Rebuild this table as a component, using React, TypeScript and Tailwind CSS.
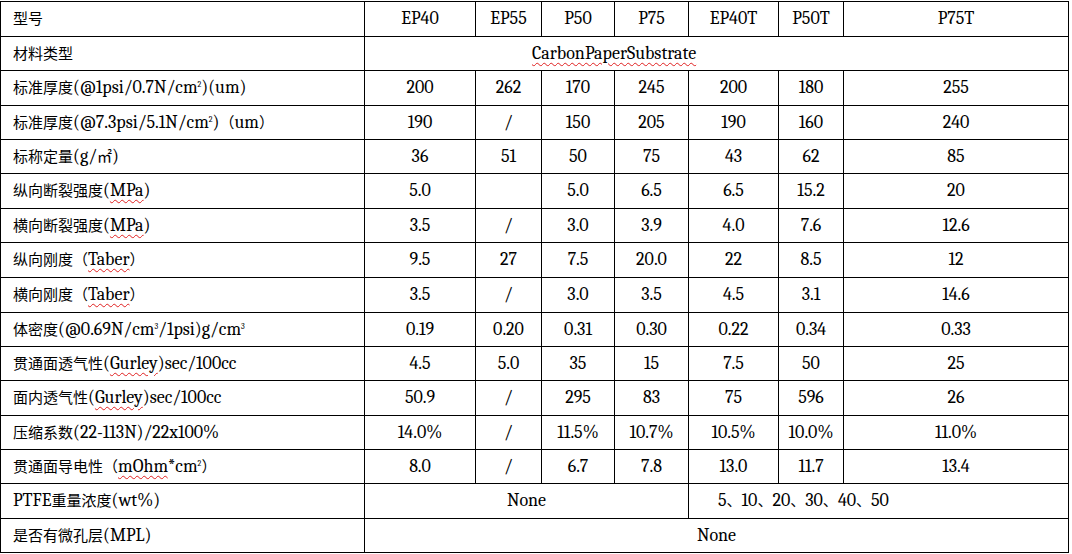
import React from "react";

const CJK = /([\u3000-\u303f\u4e00-\u9fff\uff00-\uffef\u3380-\u33ff]+)/;

function T({ s }: { s: string }) {
  const parts = s.split(CJK);
  return (
    <>
      {parts.map((p, i) =>
        p === "" ? null : CJK.test(p) ? (
          <span key={i} className="[font-family:Noto_Sans_CJK_SC,sans-serif] text-[15px]">
            {p}
          </span>
        ) : (
          <span key={i}>{p}</span>
        )
      )}
    </>
  );
}

const W = ({ children }: { children: React.ReactNode }) => (
  <span className="underline decoration-wavy decoration-[#e02020] decoration-1 underline-offset-[3px]">{children}</span>
);

const Sup = ({ c }: { c: string }) => <sup className="text-[8px] -top-[6px] relative align-baseline">{c}</sup>;

type Row = { label: React.ReactNode; vals: string[] };

const rows: Row[] = [
  { label: <><T s="标准厚度" />(@1psi/0.7N/cm<Sup c="2" />)(um)</>, vals: ["200", "262", "170", "245", "200", "180", "255"] },
  { label: <><T s="标准厚度" />(@7.3psi/5.1N/cm<Sup c="2" />)<T s="（" />um<T s="）" /></>, vals: ["190", "/", "150", "205", "190", "160", "240"] },
  { label: <><T s="标称定量" />(g/<T s="㎡" />)</>, vals: ["36", "51", "50", "75", "43", "62", "85"] },
  { label: <><T s="纵向断裂强度" />(<W>MPa</W>)</>, vals: ["5.0", "", "5.0", "6.5", "6.5", "15.2", "20"] },
  { label: <><T s="横向断裂强度" />(<W>MPa</W>)</>, vals: ["3.5", "/", "3.0", "3.9", "4.0", "7.6", "12.6"] },
  { label: <><T s="纵向刚度（" /><W>Taber</W><T s="）" /></>, vals: ["9.5", "27", "7.5", "20.0", "22", "8.5", "12"] },
  { label: <><T s="横向刚度（" /><W>Taber</W><T s="）" /></>, vals: ["3.5", "/", "3.0", "3.5", "4.5", "3.1", "14.6"] },
  { label: <><T s="体密度" />(@0.69N/cm<Sup c="3" />/1psi)g/cm<Sup c="3" /></>, vals: ["0.19", "0.20", "0.31", "0.30", "0.22", "0.34", "0.33"] },
  { label: <><T s="贯通面透气性" />(<W>Gurley</W>)sec/100cc</>, vals: ["4.5", "5.0", "35", "15", "7.5", "50", "25"] },
  { label: <><T s="面内透气性" />(<W>Gurley</W>)sec/100cc</>, vals: ["50.9", "/", "295", "83", "75", "596", "26"] },
  { label: <><T s="压缩系数" />(22-113N)/22x100%</>, vals: ["14.0%", "/", "11.5%", "10.7%", "10.5%", "10.0%", "11.0%"] },
  { label: <><T s="贯通面导电性（" /><W>mOhm</W>*cm<Sup c="2" /><T s="）" /></>, vals: ["8.0", "/", "6.7", "7.8", "13.0", "11.7", "13.4"] },
];

const td = "border border-black text-center align-middle p-0 whitespace-nowrap";
const tdL = "border border-black text-left align-middle pl-[12px] p-0 whitespace-nowrap";

export default function App() {
  return (
    <div className="w-[1072px] h-[554px] bg-white pt-px text-black font-serif [font-family:Liberation_Serif,serif] text-[18px] leading-none">
      <table className="table-fixed border-collapse w-[1068px]">
        <colgroup>
          <col className="w-[364px]" />
          <col className="w-[111px]" />
          <col className="w-[66px]" />
          <col className="w-[73px]" />
          <col className="w-[74px]" />
          <col className="w-[90px]" />
          <col className="w-[65px]" />
          <col className="w-[225px]" />
        </colgroup>
        <tbody>
          <tr className="h-[35px]">
            <td className={tdL}><T s="型号" /></td>
            {["EP40", "EP55", "P50", "P75", "EP40T", "P50T", "P75T"].map((h) => (
              <td key={h} className={td}>{h}</td>
            ))}
          </tr>
          <tr className="h-[34px]">
            <td className={tdL}><T s="材料类型" /></td>
            <td colSpan={7} className={tdL + " pl-[167px]"}><W>CarbonPaperSubstrate</W></td>
          </tr>
          {rows.map((r, i) => (
            <tr key={i} className={i % 3 === 0 || i === 5 ? "h-[35px]" : "h-[34px]"}>
              <td className={tdL}>{r.label}</td>
              {r.vals.map((v, j) => (
                <td key={j} className={td}>{v}</td>
              ))}
            </tr>
          ))}
          <tr className="h-[35px]">
            <td className={tdL}>PTFE<T s="重量浓度" />(wt%)</td>
            <td colSpan={4} className={td}>None</td>
            <td colSpan={3} className={tdL + " pl-[29px]"}>5<T s="、" />10<T s="、" />20<T s="、" />30<T s="、" />40<T s="、" />50</td>
          </tr>
          <tr className="h-[34px]">
            <td className={tdL}><T s="是否有微孔层" />(MPL)</td>
            <td colSpan={7} className={td}>None</td>
          </tr>
        </tbody>
      </table>
    </div>
  );
}
